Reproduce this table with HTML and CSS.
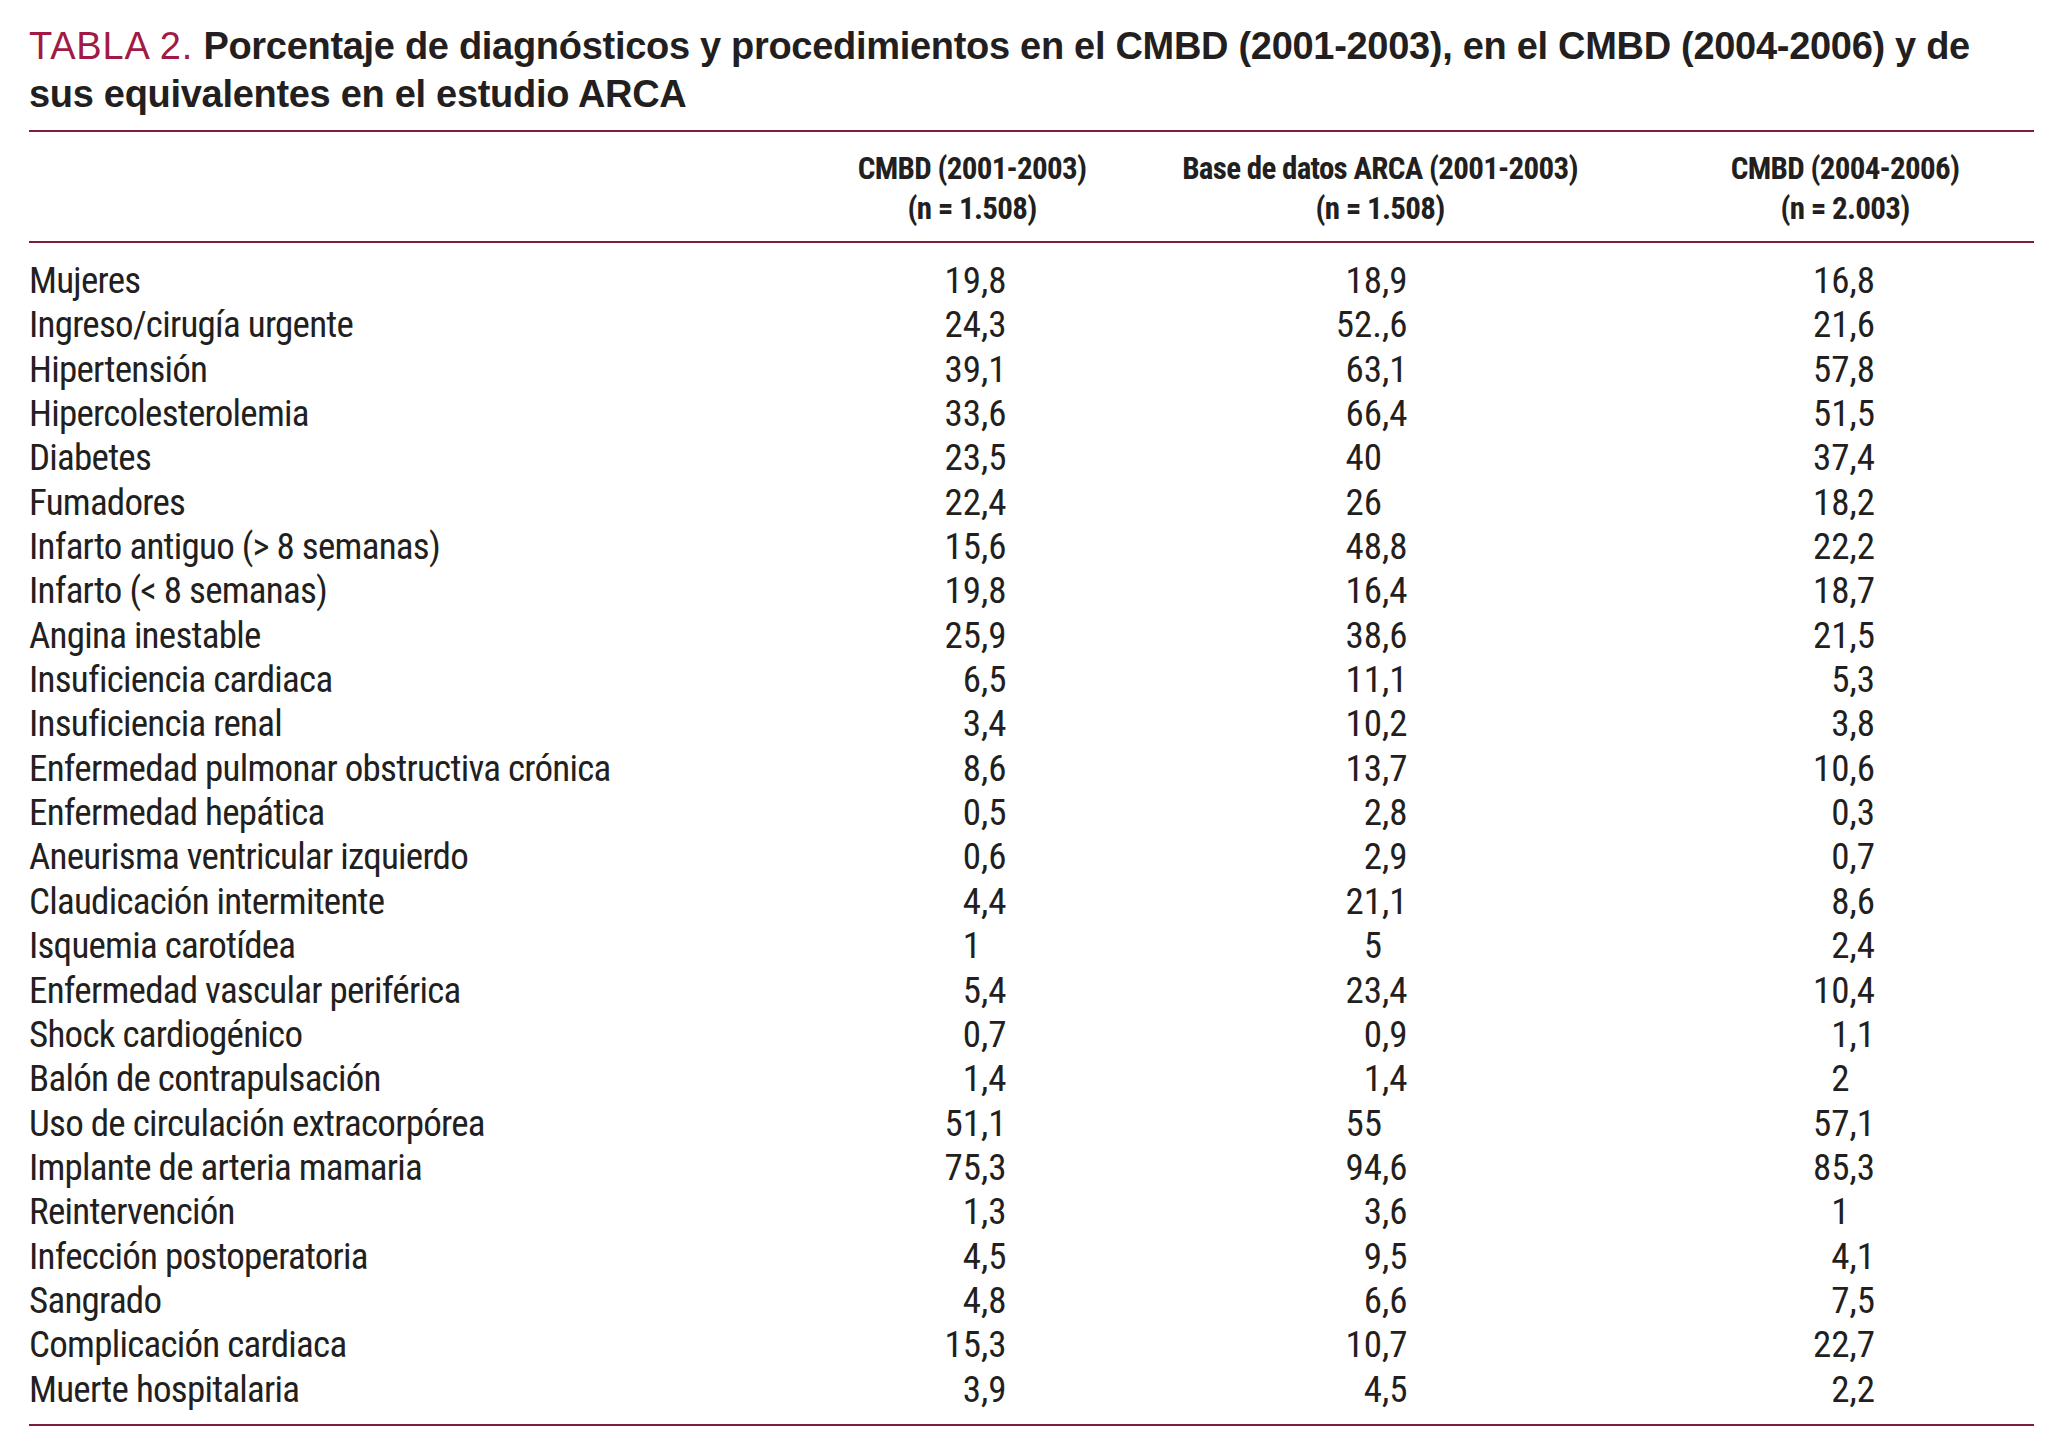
FILE: index.html
```html
<!DOCTYPE html>
<html lang="es">
<head>
<meta charset="utf-8">
<title>Tabla 2</title>
<link rel="stylesheet" href="styles.css">
</head>
<body>
<div class="page">
  <h1 class="title"><span class="label">TABLA 2.</span> Porcentaje de diagnósticos y procedimientos en el CMBD (2001-2003), en el CMBD (2004-2006) y de sus equivalentes en el estudio ARCA</h1>
  <div class="table">
    <div class="row head">
      <div class="cell"></div>
      <div class="cell hc">CMBD (2001-2003)<br>(n = 1.508)</div>
      <div class="cell hc">Base de datos ARCA (2001-2003)<br>(n = 1.508)</div>
      <div class="cell hc">CMBD (2004-2006)<br>(n = 2.003)</div>
    </div>
    <div class="body">
      <div class="row"><div class="cell">Mujeres</div><div class="num a"><span class="i">19</span><span class="f">,8</span></div><div class="num b"><span class="i">18</span><span class="f">,9</span></div><div class="num c"><span class="i">16</span><span class="f">,8</span></div></div>
      <div class="row"><div class="cell">Ingreso/cirugía urgente</div><div class="num a"><span class="i">24</span><span class="f">,3</span></div><div class="num b"><span class="i">52.</span><span class="f">,6</span></div><div class="num c"><span class="i">21</span><span class="f">,6</span></div></div>
      <div class="row"><div class="cell">Hipertensión</div><div class="num a"><span class="i">39</span><span class="f">,1</span></div><div class="num b"><span class="i">63</span><span class="f">,1</span></div><div class="num c"><span class="i">57</span><span class="f">,8</span></div></div>
      <div class="row"><div class="cell">Hipercolesterolemia</div><div class="num a"><span class="i">33</span><span class="f">,6</span></div><div class="num b"><span class="i">66</span><span class="f">,4</span></div><div class="num c"><span class="i">51</span><span class="f">,5</span></div></div>
      <div class="row"><div class="cell">Diabetes</div><div class="num a"><span class="i">23</span><span class="f">,5</span></div><div class="num b"><span class="i">40</span><span class="f"></span></div><div class="num c"><span class="i">37</span><span class="f">,4</span></div></div>
      <div class="row"><div class="cell">Fumadores</div><div class="num a"><span class="i">22</span><span class="f">,4</span></div><div class="num b"><span class="i">26</span><span class="f"></span></div><div class="num c"><span class="i">18</span><span class="f">,2</span></div></div>
      <div class="row"><div class="cell">Infarto antiguo (&gt; 8 semanas)</div><div class="num a"><span class="i">15</span><span class="f">,6</span></div><div class="num b"><span class="i">48</span><span class="f">,8</span></div><div class="num c"><span class="i">22</span><span class="f">,2</span></div></div>
      <div class="row"><div class="cell">Infarto (&lt; 8 semanas)</div><div class="num a"><span class="i">19</span><span class="f">,8</span></div><div class="num b"><span class="i">16</span><span class="f">,4</span></div><div class="num c"><span class="i">18</span><span class="f">,7</span></div></div>
      <div class="row"><div class="cell">Angina inestable</div><div class="num a"><span class="i">25</span><span class="f">,9</span></div><div class="num b"><span class="i">38</span><span class="f">,6</span></div><div class="num c"><span class="i">21</span><span class="f">,5</span></div></div>
      <div class="row"><div class="cell">Insuficiencia cardiaca</div><div class="num a"><span class="i">6</span><span class="f">,5</span></div><div class="num b"><span class="i">11</span><span class="f">,1</span></div><div class="num c"><span class="i">5</span><span class="f">,3</span></div></div>
      <div class="row"><div class="cell">Insuficiencia renal</div><div class="num a"><span class="i">3</span><span class="f">,4</span></div><div class="num b"><span class="i">10</span><span class="f">,2</span></div><div class="num c"><span class="i">3</span><span class="f">,8</span></div></div>
      <div class="row"><div class="cell">Enfermedad pulmonar obstructiva crónica</div><div class="num a"><span class="i">8</span><span class="f">,6</span></div><div class="num b"><span class="i">13</span><span class="f">,7</span></div><div class="num c"><span class="i">10</span><span class="f">,6</span></div></div>
      <div class="row"><div class="cell">Enfermedad hepática</div><div class="num a"><span class="i">0</span><span class="f">,5</span></div><div class="num b"><span class="i">2</span><span class="f">,8</span></div><div class="num c"><span class="i">0</span><span class="f">,3</span></div></div>
      <div class="row"><div class="cell">Aneurisma ventricular izquierdo</div><div class="num a"><span class="i">0</span><span class="f">,6</span></div><div class="num b"><span class="i">2</span><span class="f">,9</span></div><div class="num c"><span class="i">0</span><span class="f">,7</span></div></div>
      <div class="row"><div class="cell">Claudicación intermitente</div><div class="num a"><span class="i">4</span><span class="f">,4</span></div><div class="num b"><span class="i">21</span><span class="f">,1</span></div><div class="num c"><span class="i">8</span><span class="f">,6</span></div></div>
      <div class="row"><div class="cell">Isquemia carotídea</div><div class="num a"><span class="i">1</span><span class="f"></span></div><div class="num b"><span class="i">5</span><span class="f"></span></div><div class="num c"><span class="i">2</span><span class="f">,4</span></div></div>
      <div class="row"><div class="cell">Enfermedad vascular periférica</div><div class="num a"><span class="i">5</span><span class="f">,4</span></div><div class="num b"><span class="i">23</span><span class="f">,4</span></div><div class="num c"><span class="i">10</span><span class="f">,4</span></div></div>
      <div class="row"><div class="cell">Shock cardiogénico</div><div class="num a"><span class="i">0</span><span class="f">,7</span></div><div class="num b"><span class="i">0</span><span class="f">,9</span></div><div class="num c"><span class="i">1</span><span class="f">,1</span></div></div>
      <div class="row"><div class="cell">Balón de contrapulsación</div><div class="num a"><span class="i">1</span><span class="f">,4</span></div><div class="num b"><span class="i">1</span><span class="f">,4</span></div><div class="num c"><span class="i">2</span><span class="f"></span></div></div>
      <div class="row"><div class="cell">Uso de circulación extracorpórea</div><div class="num a"><span class="i">51</span><span class="f">,1</span></div><div class="num b"><span class="i">55</span><span class="f"></span></div><div class="num c"><span class="i">57</span><span class="f">,1</span></div></div>
      <div class="row"><div class="cell">Implante de arteria mamaria</div><div class="num a"><span class="i">75</span><span class="f">,3</span></div><div class="num b"><span class="i">94</span><span class="f">,6</span></div><div class="num c"><span class="i">85</span><span class="f">,3</span></div></div>
      <div class="row"><div class="cell">Reintervención</div><div class="num a"><span class="i">1</span><span class="f">,3</span></div><div class="num b"><span class="i">3</span><span class="f">,6</span></div><div class="num c"><span class="i">1</span><span class="f"></span></div></div>
      <div class="row"><div class="cell">Infección postoperatoria</div><div class="num a"><span class="i">4</span><span class="f">,5</span></div><div class="num b"><span class="i">9</span><span class="f">,5</span></div><div class="num c"><span class="i">4</span><span class="f">,1</span></div></div>
      <div class="row"><div class="cell">Sangrado</div><div class="num a"><span class="i">4</span><span class="f">,8</span></div><div class="num b"><span class="i">6</span><span class="f">,6</span></div><div class="num c"><span class="i">7</span><span class="f">,5</span></div></div>
      <div class="row"><div class="cell">Complicación cardiaca</div><div class="num a"><span class="i">15</span><span class="f">,3</span></div><div class="num b"><span class="i">10</span><span class="f">,7</span></div><div class="num c"><span class="i">22</span><span class="f">,7</span></div></div>
      <div class="row"><div class="cell">Muerte hospitalaria</div><div class="num a"><span class="i">3</span><span class="f">,9</span></div><div class="num b"><span class="i">4</span><span class="f">,5</span></div><div class="num c"><span class="i">2</span><span class="f">,2</span></div></div>
    </div>
  </div>
</div>
</body>
</html>
```

FILE: styles.css
```css
html, body {
  margin: 0;
  padding: 0;
  background: #ffffff;
}

.page {
  padding: 22px 28px 0 29px;
  color: #231f20;
}

.title {
  margin: 0 0 12px 0;
  font-family: "Liberation Sans", Arial, sans-serif;
  font-size: 38px;
  line-height: 48px;
  font-weight: bold;
  letter-spacing: -0.3px;
  color: #231f20;
}

.title .label {
  font-weight: normal;
  letter-spacing: 0.8px;
  color: #a11a45;
}

.table {
  border-top: 2px solid #7a1d3e;
  border-bottom: 2px solid #7a1d3e;
}

.row {
  display: grid;
  grid-template-columns: 811px 264px 552px 1fr;
}

.head {
  padding: 17px 0 12px 0;
  border-bottom: 2px solid #7a1d3e;
  font-family: "Roboto Condensed", Roboto, "Liberation Sans", sans-serif;
  font-stretch: 75%;
  font-weight: bold;
  font-size: 31px;
  line-height: 40px;
  letter-spacing: -0.7px;
}

.hc {
  text-align: center;
}

.body {
  padding: 16px 0 12px 0;
  font-family: "Roboto Condensed", Roboto, "Liberation Sans", sans-serif;
  font-stretch: 75%;
  font-size: 37px;
  line-height: 44.34px;
}

.body .cell {
  letter-spacing: -0.75px;
}

.num {
  display: flex;
  justify-content: center;
}

.num.a {
  padding-left: 18px;
}

.num.b {
  padding-left: 4px;
}

.num.c {
  padding-left: 9px;
}

.num .i {
  width: 80px;
  text-align: right;
}

.num .f {
  width: 80px;
  text-align: left;
}
```
